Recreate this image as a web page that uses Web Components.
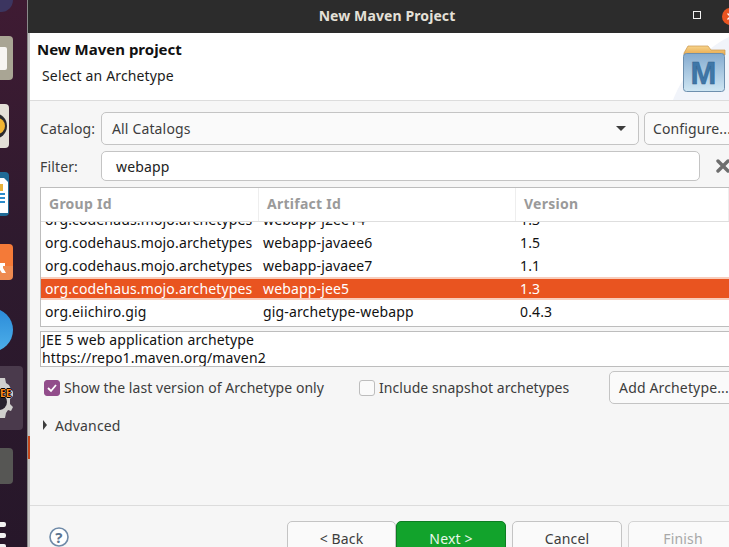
<!DOCTYPE html>
<html>
<head>
<meta charset="utf-8">
<style>
  html, body { margin: 0; height: 100%; overflow: hidden; }
  body {
    display: flex;
    width: 729px;
    height: 547px;
    font-family: "Noto Sans", sans-serif;
    font-size: 14px;
    letter-spacing: .15px;
  }
</style>
</head>
<body>
<desktop-dock>
  <dock-tile style="--top: 24px; --w: 13px; --h: 44px; --bg: #a9a594;">
    <svg width="7" height="44" viewBox="0 0 7 44"><rect x="-4" y="11" width="11" height="23" rx="2" fill="#f7f5f2"/></svg>
  </dock-tile>
  <dock-tile style="--top: 24px; --w: 9px; --h: 44px; --bg: #e4e0d8;">
    <svg width="9" height="44" viewBox="0 0 9 44"><circle cx="-6" cy="22" r="13" fill="#2b2a2e"/><circle cx="-3" cy="22" r="8" fill="#f2b632"/></svg>
  </dock-tile>
  <dock-tile style="--top: 24px; --w: 9px; --h: 44px; --bg: #1f6a96;">
    <svg width="9" height="44" viewBox="0 0 9 44"><path d="M0 6H4L8 10V41H0Z" fill="#fff"/><rect y="12" width="3" height="7" fill="#e8b23a"/><rect y="21" width="5" height="2" fill="#2b8ccb"/><rect y="25" width="5" height="2" fill="#2b8ccb"/><rect y="29" width="5" height="2" fill="#2b8ccb"/></svg>
  </dock-tile>
  <dock-tile style="--top: 28px; --w: 13px; --h: 36px; --bg: linear-gradient(#f47a38 60%, #ee8a50 60%);">
    <svg width="13" height="36" viewBox="0 0 13 36"><path d="M0 19H5V22H3V24L6 29H2L0 26Z" fill="#fff"/></svg>
  </dock-tile>
  <dock-tile style="--top: 28px; --w: 13px; --h: 44px; --bg: transparent;">
    <svg width="13" height="44" viewBox="0 0 13 44"><defs><linearGradient id="b" x1="0" y1="0" x2="0" y2="1"><stop offset="0" stop-color="#2a8ad8"/><stop offset="1" stop-color="#4eb0ea"/></linearGradient></defs><circle cx="-9" cy="22" r="22" fill="url(#b)"/></svg>
  </dock-tile>
  <dock-tile style="--top: 14px; --w: 23px; --h: 64px; --bg: #4a3a4c;">
    <jee-gear></jee-gear>
  </dock-tile>
  <dock-tile style="--top: 18px; --w: 13px; --h: 36px; --bg: #565654;"></dock-tile>
  <dock-dots></dock-dots>
</desktop-dock>
<dock-edge></dock-edge>

<wizard-window>
  <title-bar slot="title">New Maven Project</title-bar>
  <wizard-header slot="header" heading="New Maven project" sub="Select an Archetype"></wizard-header>

  <form-row label="Catalog:" style="--row-top: 11px;">
    <ui-combo>All Catalogs</ui-combo>
    <ui-button style="--w: 96px; --h: 33px; --ml: 5px;">Configure...</ui-button>
  </form-row>
  <form-row label="Filter:" style="--row-top: 6px;">
    <ui-field>webapp</ui-field>
    <clear-icon></clear-icon>
  </form-row>

  <archetype-table></archetype-table>
  <desc-box>JEE 5 web application archetype<br>https://repo1.maven.org/maven2</desc-box>

  <options-row>
    <ui-check checked style="--gap-left: 4px; --box-w: 315px;">Show the last version of Archetype only</ui-check>
    <ui-check style="--box-w: 250px;">Include snapshot archetypes</ui-check>
    <ui-button style="--w: 130px; --h: 33px;">Add Archetype...</ui-button>
  </options-row>
  <advanced-toggle>Advanced</advanced-toggle>

  <wizard-footer slot="footer">
    <ui-button style="--w: 109px; --h: 34px;">&lt; Back</ui-button>
    <ui-button primary style="--w: 110px; --h: 34px;">Next &gt;</ui-button>
    <ui-button style="--w: 110px; --h: 34px; --ml: 6px;">Cancel</ui-button>
    <ui-button disabled style="--w: 110px; --h: 34px; --ml: 6px;">Finish</ui-button>
  </wizard-footer>
</wizard-window>

<script>
const define = (name, css, html, setup) => {
  customElements.define(name, class extends HTMLElement {
    constructor() {
      super();
      this.attachShadow({ mode: "open" });
    }
    connectedCallback() {
      this.shadowRoot.innerHTML = `<style>${css}</style>${html}`;
      if (setup) setup(this, this.shadowRoot);
    }
  });
};

define("desktop-dock", `
  :host {
    display: flex; flex-direction: column; align-items: flex-start;
    flex: none; width: 28px; height: 547px; overflow: hidden; position: relative;
    background: linear-gradient(#3f1b33, #2e1a2e 45%, #27172a);
    border-right: 1px solid #8a8a8a; box-sizing: border-box;
  }
  svg { position: absolute; left: 0; top: 0; }
`, `<svg width="14" height="14"><circle cx="1" cy="0" r="12" fill="#3c3560"/></svg><div style="height:12px;flex:none"></div><slot></slot>`);

define("dock-edge", `
  :host { display: block; flex: none; width: 2px; height: 547px; background: linear-gradient(#2c2c2c 33px, #c4c4c4 33px); }
  div { width: 2px; height: 23px; margin-top: 436px; background: #c4461c; }
`, `<div></div>`);

define("dock-tile", `
  :host {
    display: block; flex: none; position: relative; overflow: hidden;
    margin-top: var(--top); width: var(--w); height: var(--h);
    background: var(--bg); border-radius: var(--radius, 0 4px 4px 0);
  }
  ::slotted(svg) { display: block; }
`, `<slot></slot>`);

define("jee-gear", `
  :host { display: block; position: relative; width: 23px; height: 64px; }
  span {
    position: absolute; left: 0; top: 21px;
    font: bold 10px/12px "Noto Sans", sans-serif; color: #ff8c1a;
    text-shadow: 1px 0 #000, -1px 0 #000, 0 1px #000, 0 -1px #000;
  }
  svg { position: absolute; left: 0; top: 0; }
`, `<svg width="23" height="64" viewBox="0 0 23 64">
  <path d="M0 12H5L6 17L9 19L11 23L13 26V30L10 33V38L13 41L11 45L8 44L6 47L5 52H0Z" fill="#cfcfcd"/>
  <circle cx="-1" cy="36" r="8" fill="#26222e"/>
</svg><span>EE</span>`);

define("dock-dots", `
  :host { display: flex; flex-direction: column; gap: 6px; margin-top: 38px; flex: none; }
  i { display: block; width: 6px; height: 5px; border-radius: 0 2px 2px 0; background: #f2f2f2; }
`, `<i></i><i></i><i></i>`);

define("wizard-window", `
  :host {
    display: flex; flex-direction: column; flex: none; width: 699px; height: 547px;
    background: #f6f6f6; color: #3d3d3d; overflow: hidden;
  }
  .body { flex: 1; min-height: 0; display: flex; flex-direction: column; padding-left: 10px; }
  ::slotted(title-bar), ::slotted(wizard-header), ::slotted(wizard-footer) { flex: none; }
`, `<slot name="title"></slot><slot name="header"></slot><div class="body"><slot></slot></div><slot name="footer"></slot>`);

define("title-bar", `
  :host {
    display: flex; align-items: center; justify-content: center; position: relative;
    height: 33px; background: #2c2c2c; color: #e4e0d8;
    font: bold 14px "Noto Sans", sans-serif; letter-spacing: .1px;
  }
  .title { margin-left: 15px; margin-top: -3px; }
  .max {
    position: absolute; left: 663px; top: 11px; width: 6px; height: 6px;
    border: 1px solid #f2f2f2;
  }
  .close {
    position: absolute; left: 692px; top: 8px; width: 17px; height: 17px;
    border-radius: 50%; background: #e95420;
  }
  .close svg { display: block; }
`, `<span class="title"><slot></slot></span><div class="max"></div>
<div class="close"><svg width="17" height="17"><path d="M5.5 5.5L11.5 11.5M11.5 5.5L5.5 11.5" stroke="#fff" stroke-width="1.3"/></svg></div>`);

define("wizard-header", `
  :host {
    display: block; position: relative; height: 68px; box-sizing: border-box;
    background: #fff; border-bottom: 1px solid #dcdcdc; color: #111;
    padding: 7px 0 0 7px;
  }
  h1 { margin: 0; font: bold 15px/18px "Noto Sans", sans-serif; letter-spacing: 0; }
  p { margin: 9px 0 0 5px; font: 14px/18px "Noto Sans", sans-serif; color: #1c1c1c; }
  svg { position: absolute; right: 0; top: 0; }
  text { font: bold 31px "Liberation Sans", sans-serif; }
`, `<h1></h1><p></p>
<svg width="60" height="67" viewBox="0 0 60 67">
  <defs>
    <linearGradient id="fb" x1="0" y1="0" x2="0" y2="1"><stop offset="0" stop-color="#84abd0"/><stop offset="1" stop-color="#cfe6f3"/></linearGradient>
    <linearGradient id="ft" x1="0" y1="0" x2="0" y2="1"><stop offset="0" stop-color="#f7d48c"/><stop offset="1" stop-color="#e8a84c"/></linearGradient>
  </defs>
  <path d="M4 67C14 40 38 14 60 4V67Z" fill="#f1f4fa"/>
  <path d="M15 20L19 13H39L42 17H56V22H15Z" fill="url(#ft)" stroke="#c9974c" stroke-width=".7"/>
  <rect x="14.5" y="20.5" width="41" height="38" rx="3" fill="url(#fb)" stroke="#6d8fae"/>
  <text x="34.5" y="51" text-anchor="middle" fill="#3f77a8" stroke="#2f628f" stroke-width=".5">M</text>
</svg>`, (el, root) => {
  root.querySelector("h1").textContent = el.getAttribute("heading");
  root.querySelector("p").textContent = el.getAttribute("sub");
});

define("form-row", `
  :host { display: flex; align-items: center; flex: none; margin-top: var(--row-top); margin-right: -60px; }
  label { width: 61px; flex: none; color: #3d3d3d; }
  .main { display: flex; align-items: center; flex: 1; }
`, `<label></label><div class="main"><slot></slot></div>`, (el, root) => {
  root.querySelector("label").textContent = el.getAttribute("label");
});

define("ui-combo", `
  :host {
    display: flex; align-items: center; justify-content: space-between; flex: none;
    width: 538px; height: 33px; box-sizing: border-box; padding: 0 12px 0 10px;
    background: #fafafa; border: 1px solid #c4c4c4; border-radius: 5px; color: #3d3d3d;
  }
  i { width: 0; height: 0; border: 5px solid transparent; border-top: 5px solid #3d3d3d; border-bottom: 0; }
`, `<span><slot></slot></span><i></i>`);

define("ui-field", `
  :host {
    display: flex; align-items: center; flex: none;
    width: 599px; height: 30px; box-sizing: border-box; padding: 0 14px;
    background: #fff; border: 1px solid #c4c4c4; border-radius: 5px; color: #222;
  }
`, `<slot></slot>`);

define("clear-icon", `
  :host { display: block; flex: none; margin-left: 16px; width: 14px; height: 14px; }
  svg { display: block; }
`, `<svg width="14" height="14"><path d="M2 2L12 12M12 2L2 12" stroke="#6e6e6e" stroke-width="3.4" stroke-linecap="round"/></svg>`);

define("ui-button", `
  :host {
    display: flex; align-items: center; justify-content: center; flex: none;
    width: var(--w); height: var(--h); margin-left: var(--ml, 0); box-sizing: border-box;
    background: #fafafa; border: 1px solid #c4c4c4; border-radius: 5px; color: #3d3d3d;
    white-space: nowrap;
  }
  :host([primary]) { background: #12a32c; border-color: #0d7d22; color: #e8f8ea; }
  :host([disabled]) { color: #a8a8a8; border-color: #d4d4d4; }
`, `<slot></slot>`);

define("archetype-table", `
  :host {
    display: block; flex: none; margin-top: 6px; height: 140px; box-sizing: border-box;
    margin-right: -1px; background: #fff; border: 1px solid #bdbdbd; overflow: hidden;
  }
  .head, .row { display: grid; grid-template-columns: 218px 257px 1fr; }
  .head { height: 33px; align-items: center; border-bottom: 1px solid #dedede; position: relative; z-index: 1; background: #fff; font-weight: bold; color: #9a9a9a; letter-spacing: .25px; }
  .head span { padding-left: 8px; height: 33px; line-height: 32px; border-right: 1px solid #eee; }
  .list { height: 104px; overflow: hidden; }
  .row { height: 23px; line-height: 23px; color: #111; }
  .row span { padding-left: 4px; white-space: nowrap; }
  .row:first-child { margin-top: -14px; }
  .row.sel { background: #e95420; color: #fff; box-shadow: inset 0 2px #f8cdbc, inset 0 -2px #f8cdbc; }
`, `<div class="head"><span>Group Id</span><span>Artifact Id</span><span>Version</span></div>
<div class="list"></div>`, (el, root) => {
  const rows = [
    ["org.codehaus.mojo.archetypes", "webapp-j2ee14", "1.3"],
    ["org.codehaus.mojo.archetypes", "webapp-javaee6", "1.5"],
    ["org.codehaus.mojo.archetypes", "webapp-javaee7", "1.1"],
    ["org.codehaus.mojo.archetypes", "webapp-jee5", "1.3", true],
    ["org.eiichiro.gig", "gig-archetype-webapp", "0.4.3"],
  ];
  root.querySelector(".list").innerHTML = rows.map(([g, a, v, sel]) =>
    `<div class="row${sel ? " sel" : ""}"><span>${g}</span><span>${a}</span><span>${v}</span></div>`).join("");
});

define("desc-box", `
  :host {
    display: block; flex: none; margin-top: 4px; height: 36px; box-sizing: border-box;
    margin-right: -1px; padding: 0 0 0 1px; background: #fff; border: 1px solid #bdbdbd; border-right: 0;
    line-height: 18px; color: #111; overflow: hidden;
  }
  div { margin-top: -1px; }
`, `<div><slot></slot></div>`);

define("options-row", `
  :host { display: flex; align-items: center; flex: none; margin-top: 3px; height: 35px; margin-right: -60px; }
`, `<slot></slot>`);

define("ui-check", `
  :host {
    display: flex; align-items: center; gap: 4px; flex: none;
    margin-left: var(--gap-left, 0); width: var(--box-w); color: #3d3d3d; letter-spacing: .05px;
  }
  i {
    display: block; flex: none; width: 16px; height: 16px; box-sizing: border-box;
    background: #fafafa; border: 1px solid #bdbdbd; border-radius: 3px;
  }
  :host([checked]) i { background: #924d8b; border-color: #924d8b; }
  svg { display: none; }
  :host([checked]) svg { display: block; }
`, `<i><svg width="14" height="14"><path d="M3 7L6 10L11 4" fill="none" stroke="#fff" stroke-width="1.8"/></svg></i><span><slot></slot></span>`);

define("advanced-toggle", `
  :host { display: flex; align-items: center; flex: none; margin-top: 10px; height: 20px; margin-left: 3px; color: #3d3d3d; }
  i { width: 0; height: 0; border: 5px solid transparent; border-left: 4px solid #3d3d3d; border-right: 0; margin-right: 8px; }
`, `<i></i><slot></slot>`);

define("wizard-footer", `
  :host {
    display: flex; align-items: flex-start; height: 42px; box-sizing: border-box;
    border-top: 1px solid #dcdcdc; padding: 15px 0 0 19px; position: relative; margin-right: -60px;
  }
  svg { display: block; flex: none; margin: 6px 218px 0 0; }
  text { font: bold 15px "Noto Sans", sans-serif; }
`, `<svg width="20" height="20"><circle cx="10" cy="10" r="9" fill="#fff" stroke="#6f8aa8" stroke-width="1.6"/><text x="10" y="15.5" text-anchor="middle" fill="#5c7490">?</text></svg><slot></slot>`);
</script>
</body>
</html>
